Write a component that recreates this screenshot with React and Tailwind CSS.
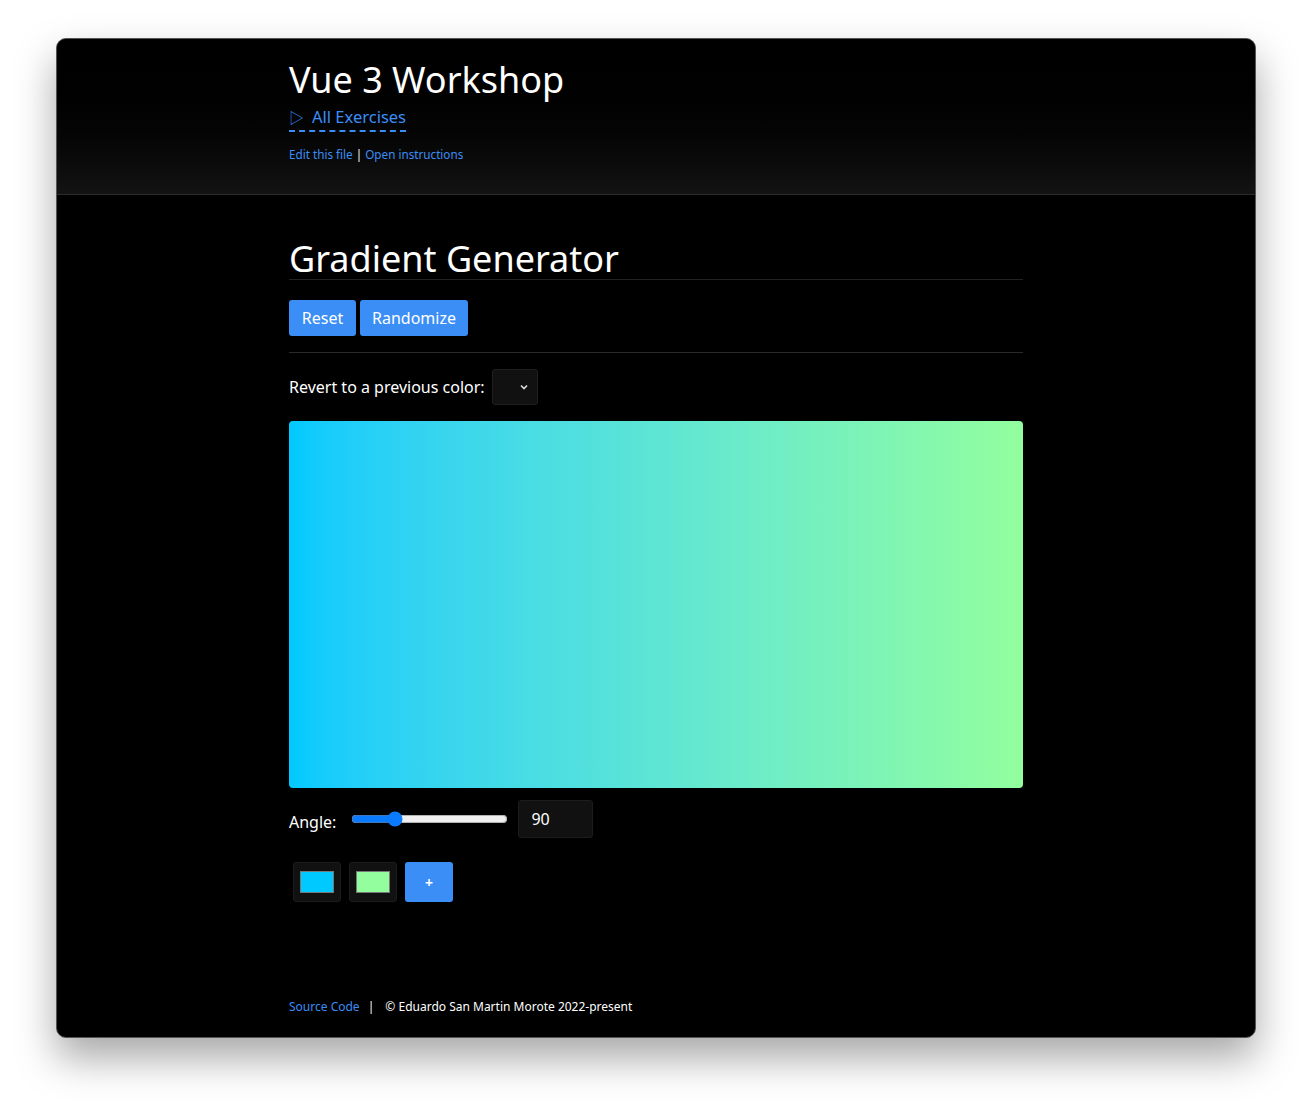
import { useState } from 'react';

export default function App() {
  const [angle, setAngle] = useState(90);
  const colors = ['#00c9ff', '#92fe9d'];

  return (
    <div className="min-h-screen bg-white pt-[38px] pl-[56px]" style={{ fontFamily: '"Noto Sans", "Noto Sans CJK KR", sans-serif' }}>
      <div className="w-[1200px] h-[1000px] bg-black rounded-[10px] border border-[#555] overflow-hidden shadow-[0_20px_40px_rgba(0,0,0,0.35)] flex flex-col">
        {/* Header */}
        <div className="h-[156px] bg-gradient-to-b from-[#000] to-[#131313] border-b border-[#2c2c2c] shrink-0">
          <div className="w-[734px] mx-auto pt-[17px]">
            <h1 className="text-[36px] leading-[48px] text-white">Vue 3 Workshop</h1>
            <a className="inline-block mt-[2px] text-[16.5px] leading-[22px] text-[#3a8ef6] border-b-2 border-dashed border-[#3a8ef6] pb-[2px]">
              <span className="text-[15px] mr-[8px]">▷</span>All Exercises
            </a>
            <div className="mt-[14px] text-[11.7px] text-[#3a8ef6]">
              Edit this file <span className="text-white">|</span> Open instructions
            </div>
          </div>
        </div>

        {/* Main */}
        <div className="flex-1 flex flex-col">
          <div className="w-[734px] mx-auto pt-[43px]">
            <h2 className="text-[36px] leading-[41px] text-white border-b border-[#222]">Gradient Generator</h2>
            <div className="flex gap-[4px] mt-[20px]">
              <button className="h-[36px] w-[67px] bg-[#3a8ef6] text-white text-[16px] rounded-[3px]">Reset</button>
              <button className="h-[36px] w-[108px] bg-[#3a8ef6] text-white text-[16px] rounded-[3px]">Randomize</button>
            </div>
            <hr className="mt-[16px] border-[#2a2a2a]" />
            <div className="flex items-center mt-[16px] gap-[7px]">
              <span className="text-white text-[16px]">Revert to a previous color:</span>
              <div className="w-[46px] h-[36px] bg-[#111] border border-[#1f1f1f] rounded-[3px] flex items-center justify-end pr-[8px]">
                <svg width="10" height="10" viewBox="0 0 10 10"><path d="M2 3.5 L5 6.5 L8 3.5" fill="none" stroke="#ddd" strokeWidth="1.6" /></svg>
              </div>
            </div>
            <div className="mt-[16px] h-[367px] rounded-[4px] bg-gradient-to-r from-[#00c9ff] to-[#92fe9d]" />
            <div className="flex items-center mt-[12px]">
              <span className="text-white text-[16px] mt-[6px]">Angle:</span>
              <input
                type="range"
                min="0"
                max="360"
                value={angle}
                onChange={(e) => setAngle(e.target.value)}
                className="ml-[15px] w-[157px] accent-[#0a7aff]"
              />
              <input
                type="number"
                value={angle}
                onChange={(e) => setAngle(e.target.value)}
                className="ml-[10px] w-[75px] h-[38px] bg-[#111] border border-[#1c1c1c] rounded-[3px] text-white text-[16px] px-[12px]"
              />
            </div>
            <div className="flex gap-[8px] mt-[24px] ml-[4px]">
              {colors.map((c) => (
                <div key={c} className="w-[48px] h-[40px] bg-[#111] border border-[#1c1c1c] rounded-[3px] flex items-center justify-center">
                  <div className="w-[34px] h-[22px] border border-[#777]" style={{ background: c }} />
                </div>
              ))}
              <button className="w-[48px] h-[40px] bg-[#3a8ef6] text-white text-[14px] font-bold rounded-[3px]">+</button>
            </div>
          </div>
          <div className="mt-auto w-[734px] mx-auto pb-[21px] text-[12px] text-white">
            <span className="text-[#3a8ef6]">Source Code</span>
            <span className="mx-[8px]">|</span> © Eduardo San Martin Morote 2022-present
          </div>
        </div>
      </div>
    </div>
  );
}
